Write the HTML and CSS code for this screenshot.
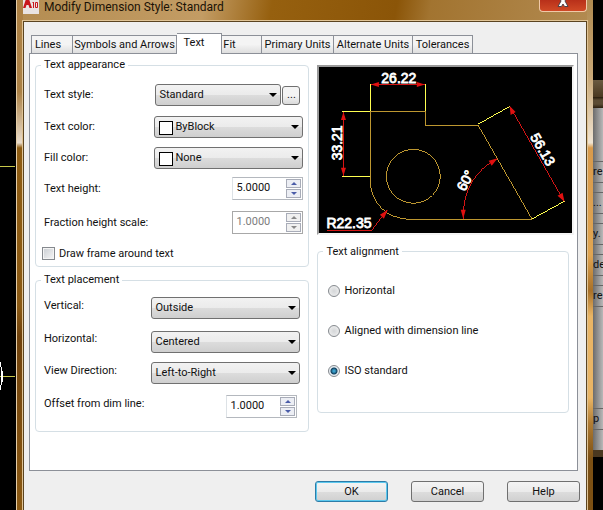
FILE: index.html
```html
<!DOCTYPE html>
<html lang="en">
<head>
<meta charset="utf-8">
<title>Modify Dimension Style: Standard</title>
<link rel="stylesheet" href="styles.css">
</head>
<body>
<div class="desktop">
  <svg class="canvas" viewBox="0 0 16 510" aria-hidden="true">
    <path d="M0 166.500H15M0 376.500H15" stroke="#c8c84a" fill="none"/>
    <path d="M0.500 362V367M1.500 367V385M0.500 385V390M2.500 371V382" stroke="#fff" fill="none"/>
  </svg>

  <main class="dialog">
    <header class="titlebar">
      <svg class="app-icon" viewBox="0 0 16 16" aria-hidden="true">
        <rect y="0" width="16" height="14" fill="#e9e4e2"/>
        <path d="M0 8L3-1H6L9 8H6.500L5.500 5H3.500L2.500 8Z" fill="#c8161c"/>
        <path d="M9.500 3L10.500 2V8M12.500 2.500H14.500V7.500H12.500Z" fill="none" stroke="#c8161c"/>
      </svg>
      <h1 class="title">Modify Dimension Style: Standard</h1>
      <button class="close" type="button" aria-label="Close">
        <svg viewBox="0 0 12 8" aria-hidden="true"><path d="M2-3H4L6-1L8-3H10L8 1L11 6.500H7.500L6 4L4.500 6.500H1L4 1Z" fill="#fff" stroke="#50444a"/></svg>
      </button>
    </header>

    <form class="client">
      <div class="tabs" role="tablist">
        <button class="tab tab-lines" type="button" role="tab">Lines</button>
        <button class="tab tab-symbols" type="button" role="tab">Symbols and Arrows</button>
        <button class="tab tab-active" type="button" role="tab" aria-selected="true">Text</button>
        <button class="tab tab-fit" type="button" role="tab">Fit</button>
        <button class="tab tab-primary" type="button" role="tab">Primary Units</button>
        <button class="tab tab-alternate" type="button" role="tab">Alternate Units</button>
        <button class="tab tab-tolerances" type="button" role="tab">Tolerances</button>
      </div>

      <div class="panel">
        <div class="column">
          <fieldset class="group appearance">
            <legend>Text appearance</legend>
            <div class="rows">
              <div class="row">
                <label for="style">Text style:</label>
                <span class="combo combo-style"><select id="style"><option>Standard</option></select></span>
                <button class="browse" type="button">...</button>
              </div>
              <div class="row">
                <label for="color">Text color:</label>
                <span class="combo swatch"><select id="color"><option>ByBlock</option></select></span>
              </div>
              <div class="row">
                <label for="fill">Fill color:</label>
                <span class="combo swatch"><select id="fill"><option>None</option></select></span>
              </div>
              <div class="row">
                <label for="height">Text height:</label>
                <span class="spin"><input id="height" type="text" value="5.0000"><span class="steps"><button type="button" class="up" aria-label="Increase text height"></button><button type="button" class="down" aria-label="Decrease text height"></button></span></span>
              </div>
              <div class="row">
                <label for="fraction">Fraction height scale:</label>
                <span class="spin spin-off"><input id="fraction" type="text" value="1.0000" disabled><span class="steps"><button type="button" class="up" disabled aria-label="Increase fraction scale"></button><button type="button" class="down" disabled aria-label="Decrease fraction scale"></button></span></span>
              </div>
              <div class="check">
                <input id="frame" type="checkbox"><label for="frame">Draw frame around text</label>
              </div>
            </div>
          </fieldset>

          <fieldset class="group placement">
            <legend>Text placement</legend>
            <div class="rows">
              <div class="row">
                <label for="vertical">Vertical:</label>
                <span class="combo"><select id="vertical"><option>Outside</option></select></span>
              </div>
              <div class="row">
                <label for="horizontal">Horizontal:</label>
                <span class="combo"><select id="horizontal"><option>Centered</option></select></span>
              </div>
              <div class="row">
                <label for="direction">View Direction:</label>
                <span class="combo"><select id="direction"><option>Left-to-Right</option></select></span>
              </div>
              <div class="row">
                <label for="offset">Offset from dim line:</label>
                <span class="spin"><input id="offset" type="text" value="1.0000"><span class="steps"><button type="button" class="up" aria-label="Increase offset"></button><button type="button" class="down" aria-label="Decrease offset"></button></span></span>
              </div>
            </div>
          </fieldset>
        </div>

        <div class="column">
          <div class="preview">
            <svg viewBox="319 67 253 166" role="img" aria-label="Dimension style preview">
              <g fill="none" stroke="#bd9730" shape-rendering="crispEdges">
                <path d="M370.500 111.500H425.500V125.500H478.500L532.500 219.500H408A37.500 38 0 0 1 370.500 181.500Z"/>
                <circle cx="413.500" cy="176.500" r="27"/>
              </g>
              <g fill="none" stroke="#ffff50" shape-rendering="crispEdges">
                <path d="M370.500 111V84M425.500 111V84M370 111.500H342M370 176.500H342M478 124.500L510 106.500M532 219.500L565 201.500"/>
              </g>
              <g fill="none" stroke="#d41414" shape-rendering="crispEdges">
                <path d="M371 84.500H425M343.500 112V176M510.500 107L564.500 201.500M497.500 159Q463 177 463.500 219M387 210.500L372 230.500H327"/>
              </g>
              <g fill="#e01010">
                <path d="M371 84.500L379 82V87ZM425 84.500L417 82V87ZM343.500 112L341 120H346ZM343.500 176L341 168H346ZM510 106L511 115L516 112ZM565 202L563 193L558 196ZM498 158.500L489 161L492 166ZM463.500 219L461 210H466ZM388 210L380 215L384 219Z"/>
              </g>
              <g class="dims">
                <text x="399" y="83">26.22</text>
                <text transform="translate(342 143) rotate(-90)">33.21</text>
                <text transform="translate(539 152) rotate(60)">56.13</text>
                <text transform="translate(470 183) rotate(-62)">60°</text>
                <text x="349" y="228">R22.35</text>
              </g>
            </svg>
          </div>

          <fieldset class="group alignment">
            <legend>Text alignment</legend>
            <div class="radio"><input id="a1" type="radio" name="align"><label for="a1">Horizontal</label></div>
            <div class="radio"><input id="a2" type="radio" name="align"><label for="a2">Aligned with dimension line</label></div>
            <div class="radio"><input id="a3" type="radio" name="align" checked><label for="a3">ISO standard</label></div>
          </fieldset>
        </div>
      </div>

      <footer class="actions">
        <button class="action action-default" type="button">OK</button>
        <button class="action" type="button">Cancel</button>
        <button class="action" type="button">Help</button>
      </footer>
    </form>
  </main>

  <aside class="behind">
    <div class="behind-title"></div>
    <div class="behind-body">
      <span>re</span><span>...</span><span>y.</span><span>de</span><span>re</span><span class="behind-last">p</span>
    </div>
    <div class="behind-frame"></div>
  </aside>
</div>
</body>
</html>
```

FILE: styles.css
```css
* { box-sizing: border-box; }

body {
  margin: 0;
  background: #000;
  color: #111;
  font: 11px/14px Roboto, "Liberation Sans", Arial, sans-serif;
}

button, input, select {
  margin: 0;
  padding: 0;
  font: inherit;
  color: inherit;
}

.desktop {
  display: grid;
  grid-template-columns: 16px 1fr 10px;
  min-height: 100vh;
  overflow: hidden;
}

.canvas { width: 16px; height: 510px; }

.dialog {
  display: flex;
  flex-direction: column;
  padding: 0 6px 0 6px;
  background:
    linear-gradient(#ad8144, #ab8145 18%, #e9dccb 28%, #8e5c12 29%, #8b5a14 60%, #70420c 66%, #8b5a14) left / 6px 100% no-repeat,
    linear-gradient(#b08a50, #c8a878 15%, #f0e4d2 28%, #d89a4c 29%, #e0a552 50%, #a87028 57%, #e9b565 62%, #e9b565 78%, #b07c34 83%, #7c5014 90%) right / 6px 100% no-repeat,
    #96600f;
  border-left: 1px solid #e4cda8;
}

.titlebar {
  display: flex;
  height: 21px;
  align-items: start;
  background: linear-gradient(100deg, #b48d52, #c39c64 32%, #96600f 44%, #8b5508 66%, #a27430 72%, #b28a50);
}

.app-icon { width: 16px; height: 16px; }

.title {
  flex: 1;
  margin: 0 5px;
  font: 12px/15px Roboto, "Open Sans", sans-serif;
  color: #1a1206;
  white-space: nowrap;
}

.close {
  display: flex;
  width: 48px;
  height: 12px;
  justify-content: center;
  align-items: start;
  border: 1px solid #f0c9a8;
  border-top: 0;
  border-radius: 0 0 4px 4px;
  background: linear-gradient(#b8301a, #d04a26);
}

.close svg { width: 12px; height: 8px; }

.client {
  display: flex;
  flex: 1;
  flex-direction: column;
  padding: 11px 8px 8px 5px;
  background: #efefef;
  border: 1px solid #5b4420;
  border-bottom: 0;
  box-shadow: 0 0 0 1px #e0c496;
}

.tabs {
  display: flex;
  align-items: end;
  padding-left: 2px;
  position: relative;
}

.tab {
  height: 18px;
  border: 1px solid #8c9098;
  border-bottom: 0;
  background: linear-gradient(#f4f4f4 50%, #dedede);
  white-space: nowrap;
}

.tab + .tab { border-left: 0; }
.tab-lines { width: 42px; padding-right: 8px; }
.tab-symbols { width: 104px; }
.tab-active {
  width: 45px;
  height: 21px;
  margin-bottom: -1px;
  padding-bottom: 3px;
  padding-right: 10px;
  background: #fff;
}
.tab-fit { width: 40px; padding-right: 24px; }
.tab-primary { width: 72px; }
.tab-alternate { width: 79px; }
.tab-tolerances { width: 60px; }

.panel {
  display: grid;
  grid-template-columns: 275fr 257fr;
  gap: 8px;
  min-height: 418px;
  padding: 4px 3px 0 5px;
  background: #fff;
  border: 1px solid #8c9098;
}

.column { min-width: 0; }

.group {
  min-width: 0;
  margin: 0;
  padding: 0 5px 0 6px;
  border: 1px solid #d5dfe5;
  border-radius: 4px;
}

.group legend {
  margin-left: -1px;
  padding: 0 3px;
  line-height: 14px;
}

.placement { margin-top: 6px; }

.rows { display: grid; }
.appearance .rows { padding-top: 7px; grid-template-rows: 32px 31px 31px 31px 37px 25px; }
.placement .rows { padding: 4px 0 6px; grid-template-rows: 34px 33px 30px 37px; }
.placement .row { padding-right: 3px; }
.placement .row label { padding-bottom: 5px; }
.placement .spin { margin-right: 3px; }

.row { display: flex; align-items: center; }
.row label { flex: 1; padding-left: 2px; white-space: nowrap; }

.combo { position: relative; width: 149px; }
.combo-style { width: 126px; }

.combo select {
  display: block;
  width: 100%;
  height: 22px;
  padding-left: 3px;
  appearance: none;
  border: 1px solid #707070;
  border-radius: 3px;
  background: linear-gradient(#f2f2f2, #ebebeb 50%, #dcdcdc 51%, #cfcfcf);
}

.combo::after {
  content: "";
  position: absolute;
  top: 9px;
  right: 4px;
  border: 4px solid transparent;
  border-top-color: #000;
  border-bottom: 0;
}

.swatch::before {
  content: "";
  position: absolute;
  top: 5px;
  left: 5px;
  width: 12px;
  height: 12px;
  background: #fff;
  border: 1px solid #000;
}

.swatch select { padding-left: 20px; }

.browse {
  width: 18px;
  height: 19px;
  margin: 0 3px 0 1px;
  border: 1px solid #707070;
  border-radius: 3px;
  background: linear-gradient(#f4f4f4 50%, #dadada);
}

.spin {
  display: flex;
  width: 71px;
  height: 23px;
  padding: 1px;
  border: 1px solid #b4b8be;
  border-left-color: #dde2e6;
  background: #fff;
}

.spin input {
  flex: 1;
  min-width: 0;
  height: 17px;
  padding-left: 2px;
  border: 0;
  background: none;
}

.steps { display: grid; width: 15px; gap: 1px; }

.steps button {
  display: grid;
  place-items: center;
  border: 1px solid #a8acb8;
  background: #eceef4;
}

.steps button::after {
  content: "";
  border: 3px solid transparent;
  border-bottom-color: #4a5ca8;
  border-top: 0;
}

.steps .down::after { transform: rotate(180deg); }
.spin-off { border-color: #a8a8a8; }
.spin-off input { color: #7c7c7c; }
.spin-off .steps button { background: #f0f0f0; }
.spin-off .steps button::after { border-bottom-color: #888; }

.check, .radio { display: flex; align-items: center; gap: 4px; }

.check input {
  width: 13px;
  height: 13px;
  appearance: none;
  border: 1px solid #85898e;
  background: linear-gradient(135deg, #c9cdd2, #f6f6f6);
  box-shadow: inset 0 0 0 1px #f4f4f4;
}

.preview {
  margin-top: 7px;
  background: #000;
  border: 2px solid #9a9a9a;
  border-right-color: #f4f4f4;
  border-bottom-color: #f4f4f4;
}

.preview svg { display: block; width: 100%; }

.dims {
  fill: #fff;
  stroke: #fff;
  stroke-width: 0.8px;
  font: 14px "Liberation Sans", Arial, sans-serif;
  text-anchor: middle;
}

.alignment { margin: 10px 5px 0 0; padding: 12px 10px 21px; }
.alignment legend { margin-left: -5px; }
.radio { height: 40px; }

.radio input {
  width: 12px;
  height: 12px;
  appearance: none;
  border: 1px solid #85898e;
  border-radius: 50%;
  background: radial-gradient(#d4d6d8, #f4f4f4);
}

.radio input:checked {
  background: radial-gradient(circle, #3aa0cc 0 1px, #12405e 3px, #e8eef2 4px);
}

.actions {
  display: flex;
  justify-content: end;
  gap: 23px;
  padding: 10px 0 0;
  margin-right: -2px;
}

.action {
  width: 73px;
  height: 21px;
  border: 1px solid #707070;
  border-radius: 3px;
  background: linear-gradient(#f4f4f4, #ebebeb 50%, #dddddd 51%, #d0d0d0);
}

.action-default {
  border-color: #2c7ca8;
  box-shadow: inset 0 0 0 1px #5cc8ee;
}

.behind { overflow: hidden; padding-top: 80px; }
.behind-title { height: 28px; background: linear-gradient(#6a5a40, #4a3820 60%, #2c2010 62%, #5c4c34 72%, #5c4c34 86%, #2c2010); }
.behind-body { height: 342px; padding-top: 53px; background: linear-gradient(90deg, #6c6c6c, #b8b8b8); }
.behind-body span { display: block; height: 22px; margin-bottom: 9px; line-height: 20px; border: solid #666; border-width: 1px 0; }
.behind-body .behind-last { margin-top: 101px; }
.behind-frame { height: 7px; background: #4a3820; }
```
